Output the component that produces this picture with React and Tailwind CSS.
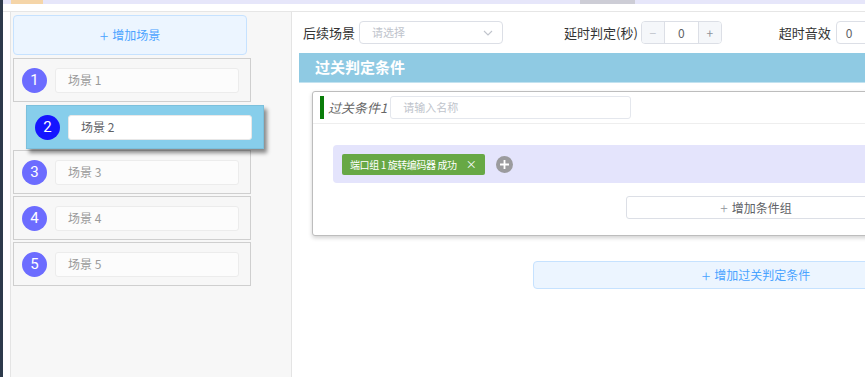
import React from "react";

const FONT = { fontFamily: '"Noto Sans CJK SC", "Noto Sans", sans-serif' };

function SceneRow({ n, dragged }) {
  return (
    <div
      className={
        dragged
          ? "relative left-[13px] top-[1px] w-[238px] h-[44px] flex items-center pl-[8px] bg-[#87ceeb] border border-[#7cc0dc] shadow-[3px_4px_4px_rgba(0,0,0,0.45)] z-10"
          : "w-[238px] h-[44px] flex items-center pl-[8px] bg-[#f7f7f7] border border-[#cfcfcf]"
      }
    >
      <div
        className={
          "w-[25px] h-[25px] rounded-full flex items-center justify-center text-white text-[15px] " +
          (dragged ? "bg-[#1515ff]" : "bg-[#6c6cff]")
        }
        style={{ fontFamily: "Roboto, Arial, sans-serif" }}
      >
        {n}
      </div>
      <div
        className={
          "ml-[8px] w-[184px] h-[25px] rounded-[3px] flex items-center pl-[12px] text-[12px] " +
          (dragged
            ? "bg-white border border-[#e8e8e8] text-[#606266]"
            : "bg-[#fcfcfc] border border-[#ececec] text-[#9a9a9a]")
        }
      >
        场景 {n}
      </div>
    </div>
  );
}

export default function App() {
  return (
    <div className="w-[865px] h-[377px] overflow-hidden flex bg-white" style={FONT}>
      <div className="w-[3px] shrink-0 bg-[#2d3a4b]" />
      <div className="flex-1 flex flex-col min-w-0">
        <div className="h-[4px] bg-[#e6e6fa] flex shrink-0">
          <div className="ml-[8px] w-[32px] bg-[#f5d5a8]" />
          <div className="ml-[537px] w-[55px] bg-[#cdcdd6]" />
        </div>
        <div className="h-[7px] shrink-0" />
        <div className="flex-1 flex border-t border-[#e6e6e6] min-h-0">
          <div className="ml-[7px] w-[282px] shrink-0 bg-[#f7f7f7] border-l border-r border-[#e4e4e4] pl-[2px] pt-[3px]">
            <div className="w-[234px] h-[40px] rounded-[4px] bg-[#ecf5ff] border border-[#c6e2ff] flex items-center justify-center text-[#4aa3ff] text-[12px]">
              <span className="text-[16px] mr-[4px] leading-none font-light">+</span>增加场景
            </div>
            <div className="mt-[3px] flex flex-col gap-[2px]">
              <SceneRow n={1} />
              <SceneRow n={2} dragged />
              <SceneRow n={3} />
              <SceneRow n={4} />
              <SceneRow n={5} />
            </div>
          </div>
          <div className="flex-1 min-w-0 overflow-hidden pl-[7px]">
            <div className="w-[914px]">
              <div className="pt-[9px] flex items-center h-[32px] text-[13px] text-[#333]">
                <span className="ml-[4px] mr-[4px] whitespace-nowrap">后续场景</span>
                <div className="w-[144px] h-[23px] border border-[#dcdfe6] rounded-[4px] flex items-center justify-between pl-[12px] pr-[8px] text-[11px] text-[#c0c4cc]">
                  <span>请选择</span>
                  <svg width="12" height="12" viewBox="0 0 12 12" fill="none" stroke="#c0c4cc" strokeWidth="1.1">
                    <path d="M2 4l4 4 4-4" />
                  </svg>
                </div>
                <span className="ml-[61px] mr-[3px] whitespace-nowrap">延时判定(秒)</span>
                <div className="w-[81px] h-[23px] border border-[#dcdfe6] rounded-[4px] flex text-[12px] overflow-hidden shrink-0">
                  <div className="w-[23px] bg-[#f5f7fa] border-r border-[#dcdfe6] flex items-center justify-center text-[#c0c4cc]">−</div>
                  <div className="flex-1 flex items-center justify-center text-[#606266]">0</div>
                  <div className="w-[23px] bg-[#f5f7fa] border-l border-[#dcdfe6] flex items-center justify-center text-[#909399]">+</div>
                </div>
                <span className="ml-[57px] mr-[5px] whitespace-nowrap">超时音效</span>
                <div className="w-[80px] h-[23px] shrink-0 border border-[#dcdfe6] rounded-[4px] flex items-center pl-[9px] text-[12px] text-[#606266]">0</div>
              </div>
              <div className="mt-[9px] h-[30px] bg-[#8fcae3] border-b border-[#c2e2f0] flex items-center pl-[16px] text-white text-[15px] font-bold">
                过关判定条件
              </div>
              <div className="mt-[8px] ml-[13px] w-[888px] h-[145px] border border-[#bdbdbd] rounded-[3px] shadow-[0_2px_4px_rgba(0,0,0,0.18)] bg-white">
                <div className="h-[32px] border-b border-[#eeeeee] flex items-center pl-[7px]">
                  <div className="w-[4px] h-[23px] bg-[#0a7d0a]" />
                  <span className="ml-[4px] text-[13px] italic text-[#666]">过关条件1</span>
                  <div className="ml-[3px] w-[241px] h-[23px] border border-[#e4e7ed] rounded-[3px] flex items-center pl-[12px] text-[11px] text-[#c0c4cc]">
                    请输入名称
                  </div>
                </div>
                <div className="mt-[21px] ml-[20px] w-[846px] h-[38px] rounded-[4px] bg-[#e4e4fc] flex items-center pl-[9px]">
                  <div className="h-[21px] rounded-[2px] bg-[#67a845] text-white text-[10px] tracking-[-0.4px] flex items-center pl-[8px] pr-[8px] whitespace-nowrap">
                    <span>端口组 1 旋转编码器 成功</span>
                    <span className="ml-[9px] text-[11px] tracking-normal">×</span>
                  </div>
                  <div className="ml-[11px] w-[17px] h-[17px] rounded-full bg-[#9b9b9e] flex items-center justify-center">
                    <svg width="11" height="11" viewBox="0 0 11 11" stroke="white" strokeWidth="1.8">
                      <path d="M5.5 1v9M1 5.5h9" />
                    </svg>
                  </div>
                </div>
                <div className="mt-[13px] mx-auto w-[260px] h-[23px] border border-[#dcdfe6] rounded-[3px] flex items-center justify-center text-[12px] text-[#606266]">
                  <span className="mr-[4px] text-[14px] leading-none text-[#909399] font-light">+</span>增加条件组
                </div>
              </div>
              <div className="mt-[25px] mx-auto w-[446px] h-[28px] rounded-[4px] bg-[#ecf5ff] border border-[#c6e2ff] flex items-center justify-center text-[12px] text-[#4aa3ff]">
                <span className="mr-[4px] text-[16px] leading-none font-light">+</span>增加过关判定条件
              </div>
            </div>
          </div>
        </div>
      </div>
    </div>
  );
}
